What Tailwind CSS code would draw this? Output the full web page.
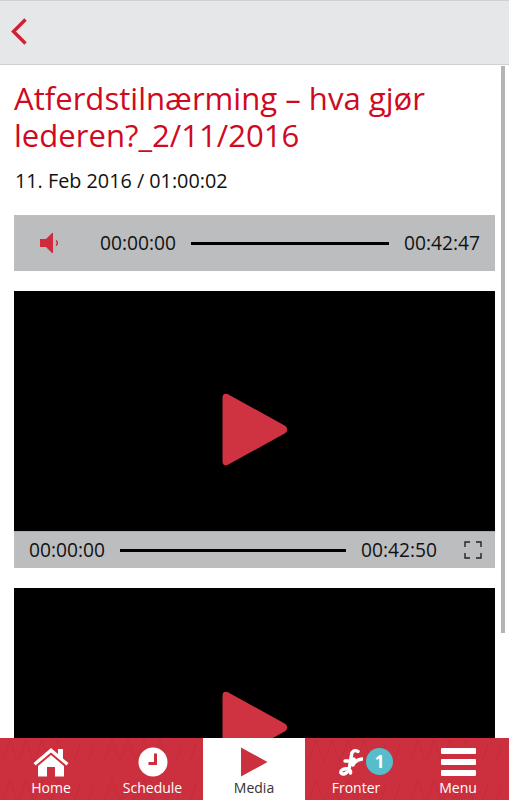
<!DOCTYPE html>
<html lang="en">
<head>
<meta charset="UTF-8">
<meta name="viewport" content="width=device-width, initial-scale=1.0">
<title>Media</title>
<script src="https://cdn.jsdelivr.net/npm/@tailwindcss/browser@4"></script>
</head>
<body class="bg-white">
<div class="flex flex-col h-[800px] w-[509px] overflow-hidden font-['Open_Sans',sans-serif]">
  <!-- top bar -->
  <header class="h-[65px] shrink-0 bg-[#e6e7e9] border-t border-b border-[#cfd0d2] flex items-center pl-[11px] pb-[3px]">
    <svg width="16" height="27" viewBox="0 0 16 27"><path d="M14.5 1.5 L2.5 13.5 L14.5 25.5" fill="none" stroke="#cf2136" stroke-width="3.4"/></svg>
  </header>

  <!-- content -->
  <main class="relative flex-1 overflow-hidden px-[14px]">
    <div class="absolute right-[4px] top-[1px] w-[4px] h-[567px] bg-[#b4b4b4]"></div>
    <h1 class="mt-[15px] text-[31.100px] leading-[37px] text-[#cf0a1f] w-[470px]">Atferdstilnærming – hva gjør lederen?_2/11/2016</h1>
    <p class="mt-[13px] ml-[1px] text-[19.800px] leading-[27px] text-[#111]">11. Feb 2016 / 01:00:02</p>

    <!-- audio player -->
    <div class="mt-[21px] w-[481px] h-[56px] bg-[#bcbdbf] flex items-center">
      <svg class="ml-[25px] mr-[39px]" width="22" height="24" viewBox="0 0 22 24"><path d="M1 8h6L13 2h1v20h-1L7 16H1z" fill="#cf2b3c"/><path d="M17 9.500a3 3 0 0 1 0 5" fill="none" stroke="#cf2b3c" stroke-width="1.500"/></svg>
      <span class="text-[19.200px] text-[#111] w-[75px]">00:00:00</span>
      <div class="ml-[16px] w-[198px] h-[3px] bg-black"></div>
      <span class="ml-[15px] text-[19.200px] text-[#111]">00:42:47</span>
    </div>

    <!-- video player -->
    <div class="mt-[20px] w-[481px] h-[240px] bg-black flex items-start pt-[102px] pl-[208px]">
      <svg width="66" height="73" viewBox="0 0 66 73"><path d="M5.500 1 L63.500 33 Q67 36.500 63.500 40 L5.500 72 Q0.500 73.500 0.500 68 L0.500 5 Q0.500 -0.500 5.500 1z" fill="#cf3240"/></svg>
    </div>
    <div class="w-[481px] h-[37px] bg-[#bcbdbf] border-t border-[#a8a9ab] flex items-center pl-[15px]">
      <span class="text-[19.200px] text-[#111] w-[75px]">00:00:00</span>
      <div class="ml-[16px] w-[226px] h-[3px] bg-black"></div>
      <span class="ml-[15px] text-[19.200px] text-[#111] w-[75px]">00:42:50</span>
      <svg class="ml-[28px]" width="18" height="18" viewBox="0 0 18 18"><path d="M1 6V1h5M12 1h5v5M17 12v5h-5M6 17H1v-5" fill="none" stroke="#222" stroke-width="1.400"/></svg>
    </div>

    <!-- second video, cut off by the tab bar -->
    <div class="mt-[20px] w-[481px] h-[240px] bg-black flex items-start pt-[103px] pl-[208px]">
      <svg width="66" height="73" viewBox="0 0 66 73"><path d="M5.500 1 L63.500 33 Q67 36.500 63.500 40 L5.500 72 Q0.500 73.500 0.500 68 L0.500 5 Q0.500 -0.500 5.500 1z" fill="#cf3240"/></svg>
    </div>
  </main>

  <!-- tab bar -->
  <nav class="relative h-[62px] shrink-0 bg-[#cc2f3d] flex">
    <svg class="absolute inset-0" width="509" height="62"><defs><pattern id="zig" width="102" height="40" patternUnits="userSpaceOnUse"><path d="M2 24 L10 2 L18 24 L26 2 L34 24 L42 2 L50 24 L58 2 L66 24 M74 24 L80 6 M88 24 L94 6" fill="none" stroke="#c02d3a" stroke-width="1"/></pattern></defs><rect width="509" height="62" fill="url(#zig)"/></svg>

    <a class="relative w-[102px] flex flex-col items-center text-white">
      <svg class="mt-[9px]" width="36" height="30" viewBox="0 0 36 30"><path d="M0.500 16 L18 1 L25 7 V2 H30 V11.500 L35.500 16 L33.500 18.500 L18 5.500 L2.500 18.500z" fill="#fff"/><path d="M5 19 L18 8 L31 19 V29.500 H22 V20 H14 V29.500 H5z" fill="#fff"/></svg>
      <span class="text-[14px] leading-[16px] mt-[3px]">Home</span>
    </a>
    <a class="relative w-[101px] flex flex-col items-center text-white">
      <svg class="mt-[9px]" width="30" height="30" viewBox="0 0 30 30"><circle cx="15" cy="15" r="14.500" fill="#fff"/><path d="M16 6.500 H19 V18 H10.500 V15 H16z" fill="#cc2f3d"/></svg>
      <span class="text-[14px] leading-[16px] mt-[3px]">Schedule</span>
    </a>
    <a class="relative w-[102px] bg-white flex flex-col items-center text-[#333]">
      <svg class="mt-[9px]" width="28" height="30" viewBox="0 0 28 30"><path d="M1 0.500 L27.500 15 L1 29.500z" fill="#cc2f3d"/></svg>
      <span class="text-[14px] leading-[16px] mt-[3px]">Media</span>
    </a>
    <a class="relative w-[102px] flex flex-col items-center text-white">
      <svg class="mt-[10px] mr-[12px]" width="26" height="29" viewBox="0 0 26 29"><path d="M21 3.500 C17.500 1.500 15 3 14.500 7 L12.500 19 C11.500 25 6 27.500 4 25 C3 22 7.500 20 11 21 C13 22 14 23 13.500 25 M8 13 H13 C15 13 16.500 12.500 17 11 L16 17 C18 13 21 11.500 25 11" fill="none" stroke="#fff" stroke-width="3.400" stroke-linecap="round" stroke-linejoin="round"/></svg>
      <span class="text-[14px] leading-[16px] mt-[3px]">Fronter</span>
      <span class="absolute left-[61px] top-[10px] w-[27px] h-[27px] rounded-full bg-[#57bccb] text-white text-[17px] font-bold flex items-center justify-center">1</span>
    </a>
    <a class="relative w-[102px] flex flex-col items-center text-white">
      <div class="mt-[10px] w-[35px] flex flex-col gap-[5px]">
        <div class="h-[6px] bg-white rounded-[1px]"></div>
        <div class="h-[6px] bg-white rounded-[1px]"></div>
        <div class="h-[6px] bg-white rounded-[1px]"></div>
      </div>
      <span class="text-[14px] leading-[16px] mt-[4px]">Menu</span>
    </a>
  </nav>
</div>
</body>
</html>
